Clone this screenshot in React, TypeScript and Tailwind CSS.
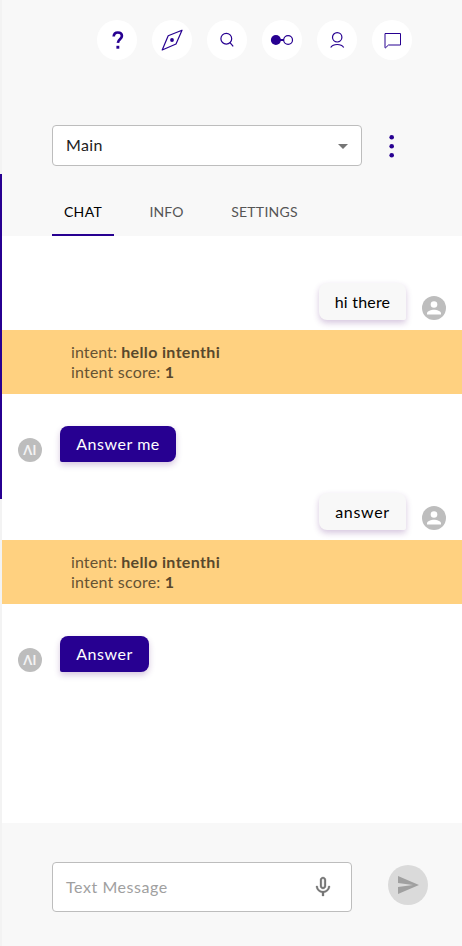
import type { ReactNode } from "react";

function RoundButton({ children }: { children: ReactNode }) {
  return (
    <button className="flex h-10 w-10 items-center justify-center rounded-full bg-white text-[#270091]">
      {children}
    </button>
  );
}

const line = { fill: "none", stroke: "currentColor", strokeWidth: 1.2 } as const;

function TopBar() {
  return (
    <nav className="flex gap-[15px] pt-5 pl-[95px]">
      <RoundButton>
        <svg width="40" height="40" viewBox="0 0 40 40">
          <path d="M16.700 16.500c.2-2.700 1.900-4 4.100-4 2.500 0 4.100 1.500 4.100 3.600 0 3.200-3.900 3.200-4 6.800" fill="none" stroke="currentColor" strokeWidth="2.700" />
          <rect x="19.400" y="25.800" width="2.900" height="2.900" fill="currentColor" />
        </svg>
      </RoundButton>
      <RoundButton>
        <svg width="40" height="40" viewBox="0 0 40 40">
          <path d="M30 10.200 16.200 15.800 10.200 30 24 24Z" {...line} strokeLinejoin="round" />
          <circle cx="20" cy="20" r="1.900" fill="currentColor" />
        </svg>
      </RoundButton>
      <RoundButton>
        <svg width="40" height="40" viewBox="0 0 40 40">
          <circle cx="19.300" cy="18.700" r="5.400" {...line} />
          <path d="m23 22.600 3.200 3.800" {...line} />
        </svg>
      </RoundButton>
      <RoundButton>
        <svg width="40" height="40" viewBox="0 0 40 40">
          <circle cx="13.900" cy="20" r="5" fill="currentColor" />
          <path d="M18 20h4" stroke="currentColor" strokeWidth="2" />
          <circle cx="26.100" cy="20" r="4.400" {...line} />
        </svg>
      </RoundButton>
      <RoundButton>
        <svg width="40" height="40" viewBox="0 0 40 40">
          <circle cx="20.200" cy="17.300" r="4.700" {...line} />
          <path d="M13.700 27.500c1.300-2 3.800-3 6.500-3s5.200 1 6.500 3" {...line} />
        </svg>
      </RoundButton>
      <RoundButton>
        <svg width="40" height="40" viewBox="0 0 40 40">
          <path d="M13 13.500H28.500V25H16.500L13.500 27.800H13Z" {...line} strokeWidth={1} strokeLinejoin="round" />
        </svg>
      </RoundButton>
    </nav>
  );
}

function UserMessage({ text, tracking }: { text: string; tracking: string }) {
  return (
    <div className="flex items-end justify-end pr-4">
      <div className={`flex h-[37px] w-[87px] items-center justify-center rounded-lg rounded-br-[2px] bg-[#f8f8f8] text-black shadow-[0_3px_6px_rgba(85,20,120,0.24)] ${tracking}`}>
        {text}
      </div>
      <svg className="ml-4" width="24" height="24" viewBox="0 0 24 24">
        <circle cx="12" cy="12" r="12" fill="#bdbdbd" />
        <circle cx="12" cy="8.500" r="3.300" fill="white" />
        <path d="M5 18.500v-1.300c0-2.300 4.400-3.500 7-3.500s7 1.200 7 3.500v1.300Z" fill="white" />
      </svg>
    </div>
  );
}

function Intent() {
  return (
    <div className="h-16 bg-[#ffd180] pt-3 pl-[69px] leading-5 text-[#665333]">
      <p><span className="tracking-[0.100px]">intent: </span><b className="tracking-[0.350px] text-[#58482c]">hello intenthi</b></p>
      <p><span className="tracking-[0.200px]">intent score: </span><b className="text-[#58482c]">1</b></p>
    </div>
  );
}

function BotMessage({ text, width }: { text: string; width: string }) {
  return (
    <div className="flex h-9 items-end pl-4">
      <span className="flex h-6 w-6 items-center justify-center rounded-full bg-[#bdbdbd] text-[13px] leading-none font-bold text-[#f4f4f4]">ΛI</span>
      <div className={`ml-[18px] flex h-9 items-center justify-center rounded-lg rounded-bl-[2px] bg-[#270091] pb-px tracking-[0.550px] text-white shadow-[0_3px_6px_rgba(85,20,120,0.24)] ${width}`}>
        {text}
      </div>
    </div>
  );
}

export default function App() {
  return (
    <div className="flex h-[946px] w-[462px] bg-white font-['Lato',sans-serif] text-[16px] tracking-[0.350px]">
      <div className="h-full w-[2px] shrink-0 bg-[#f3f3f3] pt-[174px]">
        <div className="h-[325px] bg-[#270091]" />
      </div>
      <div className="flex w-[460px] flex-col">
        <header className="h-[236px] bg-[#f8f8f8]">
          <TopBar />
          <div className="mt-[65px] flex items-center pl-[50px]">
            <div className="flex h-[41px] w-[310px] items-center justify-between rounded-[4px] border border-[#bdbdbd] bg-white pr-[13px] pl-[13px] text-[#212121]">
              <span className="pb-0.5">Main</span>
              <svg className="mt-0.5" width="10" height="5" viewBox="0 0 10 5"><path d="M0 0h10L5 5Z" fill="#757575" /></svg>
            </div>
            <svg className="ml-[25px]" width="10" height="24" viewBox="0 0 10 24" fill="#270091">
              <circle cx="4.700" cy="3.200" r="2.300" />
              <circle cx="4.700" cy="12.200" r="2.300" />
              <circle cx="4.700" cy="21.200" r="2.300" />
            </svg>
          </div>
          <div className="mt-[22px] flex h-12 gap-6 pl-[50px] text-[14px]">
            <div className="flex w-[62px] items-center justify-center border-b-2 border-[#270091] text-black">CHAT</div>
            <div className="flex w-[57px] items-center justify-center pb-0.5 tracking-[0.050px] text-[#555]">INFO</div>
            <div className="flex w-[91px] items-center justify-center pb-0.5 tracking-[0.250px] text-[#555]">SETTINGS</div>
          </div>
        </header>
        <main className="h-[587px] pt-[47px]">
          <UserMessage text="hi there" tracking="tracking-[0.200px]" />
          <div className="mt-[10px]"><Intent /></div>
          <div className="mt-8"><BotMessage text="Answer me" width="w-[116px]" /></div>
          <div className="mt-[31px]"><UserMessage text="answer" tracking="tracking-[0.700px]" /></div>
          <div className="mt-[10px]"><Intent /></div>
          <div className="mt-8"><BotMessage text="Answer" width="w-[89px]" /></div>
        </main>
        <footer className="flex h-[123px] bg-[#f8f8f8] pt-[39px] pl-[50px]">
          <div className="flex h-[50px] w-[300px] items-center justify-between rounded-[4px] border border-[#bdbdbd] bg-white pr-4 pl-[13px] tracking-[0.550px] text-[#a0a0a0]">
            <span>Text Message</span>
            <svg width="24" height="24" viewBox="0 0 24 24" fill="#757575" stroke="#757575" strokeWidth="0.300">
              <path d="M12 14c1.660 0 3-1.340 3-3V5c0-1.660-1.340-3-3-3S9 3.340 9 5v6c0 1.660 1.340 3 3 3m-1.200-9.100c0-.66.54-1.200 1.200-1.200s1.200.54 1.200 1.200l-.01 6.200c0 .66-.53 1.200-1.190 1.200s-1.200-.54-1.200-1.200zm6.500 6.100c0 3-2.540 5.100-5.300 5.100S6.700 14 6.700 11H5c0 3.410 2.720 6.230 6 6.720V21h2v-3.280c3.280-.48 6-3.300 6-6.720z" />
            </svg>
          </div>
          <button className="mt-[3px] ml-9 flex h-10 w-10 items-center justify-center rounded-full bg-[#dadada]">
            <svg width="24" height="24" viewBox="0 0 24 24" fill="#a0a0a0"><path d="M2.010 21 23 12 2.010 3 2 10l15 2-15 2z" /></svg>
          </button>
        </footer>
      </div>
    </div>
  );
}
